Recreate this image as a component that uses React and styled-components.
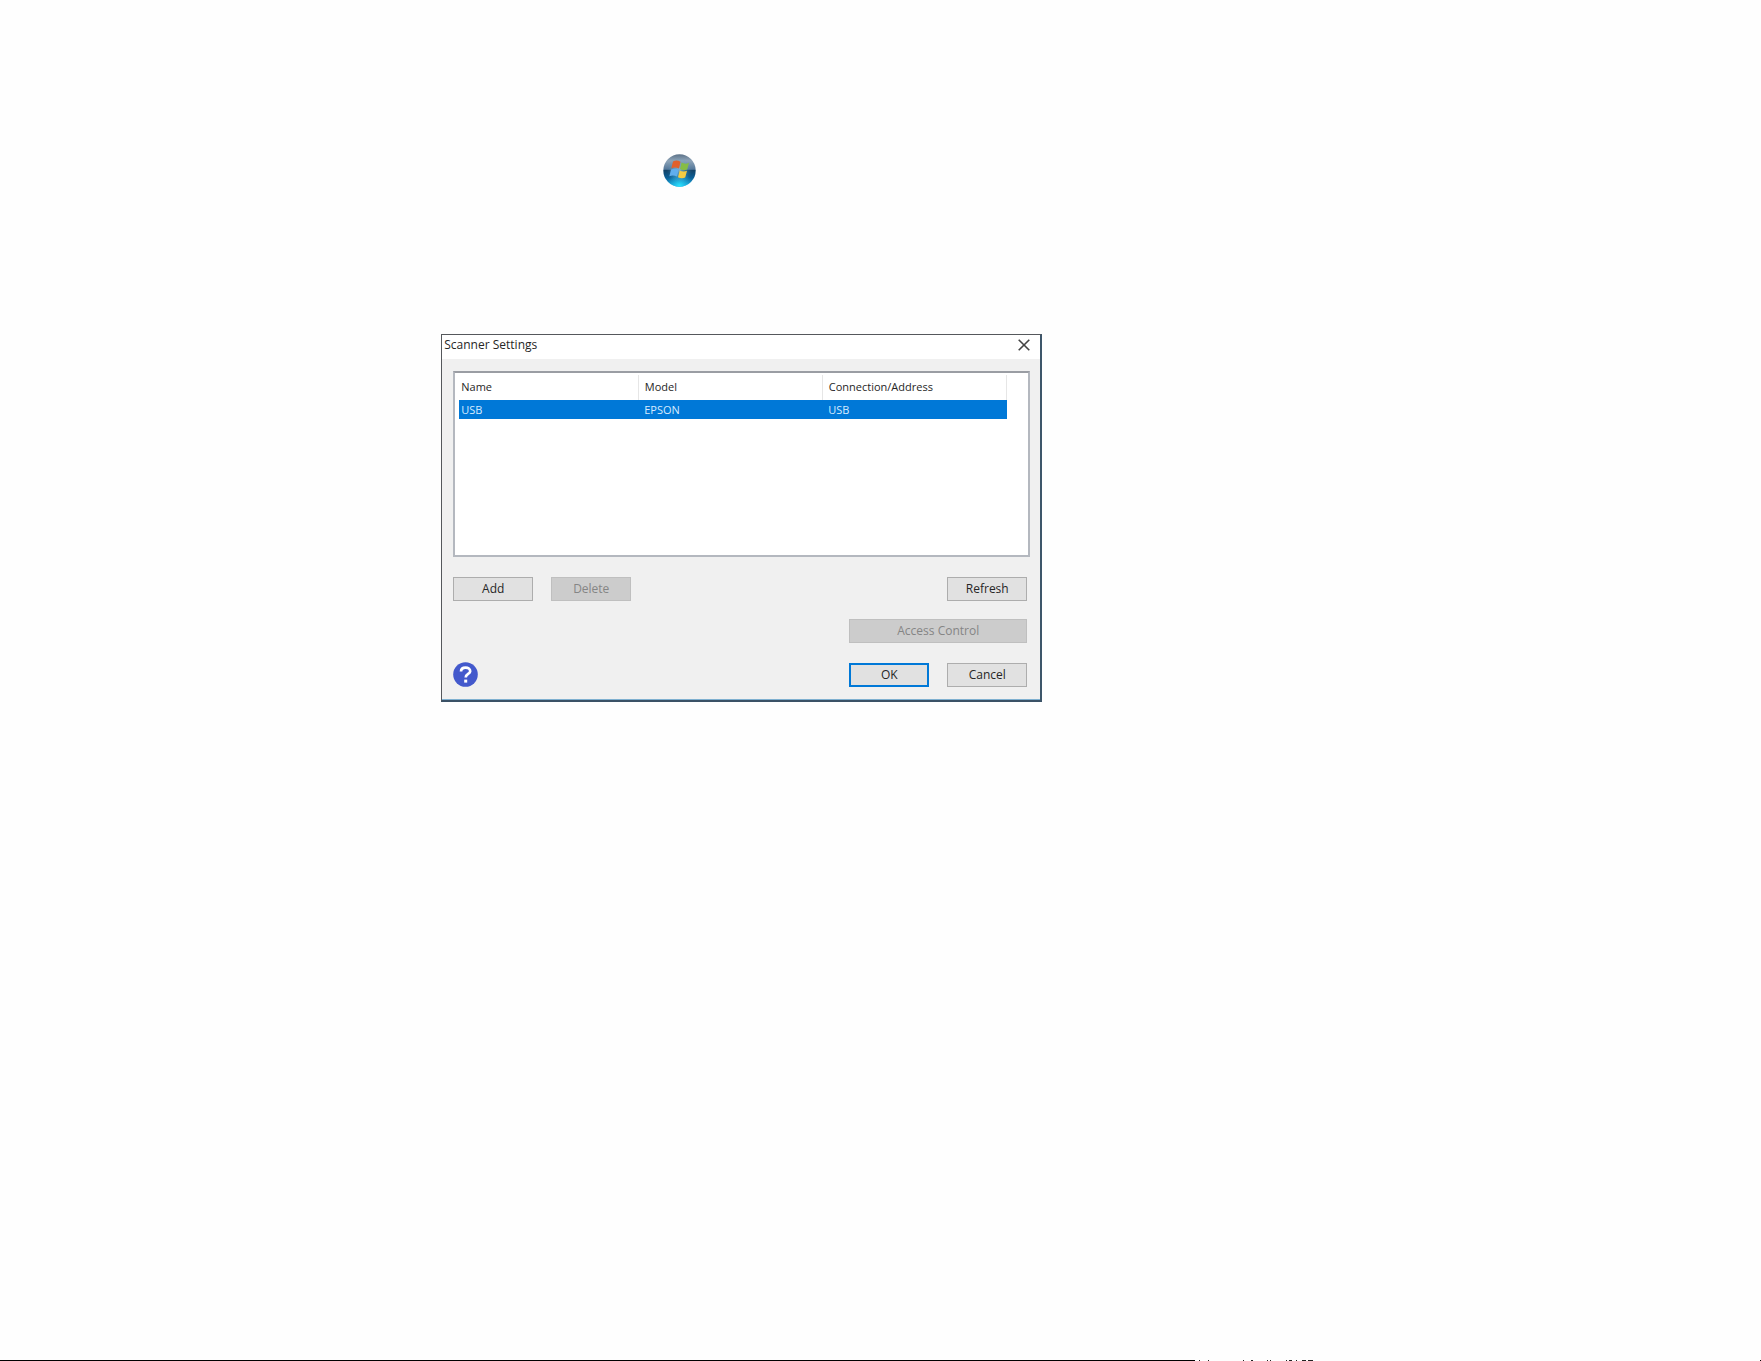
import React from "react";
import styled, { createGlobalStyle } from "styled-components";

const GlobalStyle = createGlobalStyle`
  * { box-sizing: border-box; }
  body { margin: 0; background: #fefefe; }
  button { font: inherit; margin: 0; padding: 0; }
`;

const Page = styled.main`
  min-height: 100vh;
  display: flex;
  flex-direction: column;
  font-family: "Open Sans", "Noto Sans", sans-serif;
  font-size: 12px;
  line-height: 16px;
  color: #262626;
`;

const Content = styled.div`
  flex: 1;
  display: flex;
  flex-direction: column;
  align-items: flex-start;
  gap: 147px;
  padding: 154px 24px 0 calc(25% + 1px);
`;

const StartOrb = styled.svg`
  width: 33px;
  height: 33px;
  margin-left: 222px;
`;

const Dialog = styled.section`
  width: 100%;
  max-width: 601px;
  background: #f0f0f0;
  border: 1px solid #55585c;
  border-right: 2px solid #3d566a;
  border-bottom: 2px solid #3a5166;
  box-shadow: inset 0 -1px #7fb0d0;
`;

const TitleBar = styled.header`
  display: flex;
  justify-content: space-between;
  align-items: center;
  height: 24px;
  padding: 0 10px 4px 2px;
  background: #fff;
`;

const Title = styled.h1`
  margin: 0;
  font-size: 12px;
  font-weight: 400;
`;

const CloseButton = styled.button`
  display: flex;
  border: 0;
  background: none;
`;

const Body = styled.div`
  padding: 12px 10px 13px 11px;
`;

const ListBox = styled.div`
  height: 186px;
  padding: 2px 21px 0 4px;
  background: #fff;
  border: 2px solid #b4b8bf;
  border-top-color: #9a9da3;
`;

const Table = styled.table`
  width: 100%;
  table-layout: fixed;
  border-collapse: collapse;
  font-size: 11px;
`;

const HeadCell = styled.th`
  width: ${(p) => p.$width};
  height: 25px;
  padding: 0 0 1px ${(p) => (p.$first ? "2px" : "6px")};
  border-right: 1px solid #e6e6e6;
  text-align: left;
  font-weight: 400;
`;

const SelectedRow = styled.tr`
  background: #0078d7;
  color: #d6ebff;
`;

const Cell = styled.td`
  height: 19px;
  padding: 0 0 0 ${(p) => (p.$first ? "2px" : "6px")};
`;

const ButtonRow = styled.div`
  display: flex;
  align-items: center;
  gap: 18px;
  padding-right: 3px;
  margin-top: ${(p) => p.$top};
`;

const Spacer = styled.span`
  flex: 1;
`;

const Button = styled.button`
  width: ${(p) => (p.$wide ? "178px" : "80px")};
  height: 24px;
  background: #e1e1e1;
  border: ${(p) => (p.$primary ? "2px solid #0078d7" : "1px solid #adadad")};
  color: #262626;
  &:disabled {
    background: #ccc;
    border-color: #bfbfbf;
    color: #858585;
  }
`;

const HelpButton = styled.button`
  width: 25px;
  height: 25px;
  border: 0;
  background: none;
`;

const PageEdge = styled.footer`
  display: flex;
  height: 1px;
`;

const EdgeRule = styled.div`
  width: 67.86%;
  background: #000;
`;

const EdgeMarks = styled.svg`
  width: 119px;
  height: 1px;
`;

const EdgeDot = styled.div`
  width: 1px;
  margin-left: auto;
  background: #000;
`;

const marks = [
  [4, 1], [13, 1], [48, 1], [56, 2], [72, 1], [75, 1], [91, 1],
  [94, 3], [101, 1], [107, 4], [113, 5],
];

const columns = [
  { label: "Name", value: "USB", width: "179px" },
  { label: "Model", value: "EPSON", width: "184px" },
  { label: "Connection/Address", value: "USB", width: "auto" },
];

export default function App() {
  return (
    <Page>
      <GlobalStyle />
      <Content>
        <StartOrb viewBox="0 0 33 33" role="img" aria-label="Start">
          <defs>
            <linearGradient id="orb" x1="0" y1="0" x2="0" y2="1">
              <stop offset="0" stopColor="#5c7288" />
              <stop offset=".2" stopColor="#8ea4b8" />
              <stop offset=".46" stopColor="#55789a" />
              <stop offset=".5" stopColor="#124368" />
              <stop offset=".72" stopColor="#0b5f96" />
              <stop offset="1" stopColor="#18a5d8" />
            </linearGradient>
            <radialGradient id="glow" cx=".5" cy=".98" r=".42">
              <stop offset="0" stopColor="#2be4ff" />
              <stop offset="1" stopColor="#1fb8ee" stopOpacity="0" />
            </radialGradient>
            <radialGradient id="halo" cx=".5" cy=".5" r=".42">
              <stop offset="0" stopColor="#a5d6e8" stopOpacity=".7" />
              <stop offset="1" stopColor="#4a9ac8" stopOpacity="0" />
            </radialGradient>
          </defs>
          <circle cx="16.500" cy="16.500" r="16.200" fill="url(#orb)" />
          <circle cx="16.500" cy="16.500" r="16.200" fill="url(#glow)" />
          <circle cx="16.500" cy="16.500" r="15" fill="url(#halo)" />
          <path d="M10 7.500C12.500 6 15 6.200 17.500 7.800L16 14.500C13.500 13.200 11 13 8.300 14.300Z" fill="#e2602c" />
          <path d="M18.600 8.600C21 10 23.500 10 26 8.800L24.200 15.500C21.800 16.600 19.500 16.400 17 15Z" fill="#86bd45" />
          <path d="M8 15.600C10.500 14.300 13.200 14.500 15.700 15.800L14 22.600C11.500 21.200 9 21 6.400 22.200Z" fill="#60aeee" />
          <path d="M16.700 16.400C19 17.800 21.500 17.900 24 16.800L22.200 23.600C19.800 24.700 17.400 24.600 15 23.200Z" fill="#f6cb42" />
        </StartOrb>
        <Dialog aria-labelledby="dialog-title">
          <TitleBar>
            <Title id="dialog-title">Scanner Settings</Title>
            <CloseButton type="button" aria-label="Close">
              <svg width="12" height="12" viewBox="0 0 12 12">
                <path d="M.7.7 11.3 11.3M11.3.7.7 11.3" stroke="#444" strokeWidth="1.6" />
              </svg>
            </CloseButton>
          </TitleBar>
          <Body>
            <ListBox>
              <Table>
                <thead>
                  <tr>
                    {columns.map((c, i) => (
                      <HeadCell key={c.label} $width={c.width} $first={i === 0}>{c.label}</HeadCell>
                    ))}
                  </tr>
                </thead>
                <tbody>
                  <SelectedRow aria-selected="true">
                    {columns.map((c, i) => (
                      <Cell key={c.label} $first={i === 0}>{c.value}</Cell>
                    ))}
                  </SelectedRow>
                </tbody>
              </Table>
            </ListBox>
            <ButtonRow $top="20px">
              <Button type="button">Add</Button>
              <Button type="button" disabled>Delete</Button>
              <Spacer />
              <Button type="button">Refresh</Button>
            </ButtonRow>
            <ButtonRow $top="18px">
              <Spacer />
              <Button type="button" $wide disabled>Access Control</Button>
            </ButtonRow>
            <ButtonRow $top="19px">
              <HelpButton type="button" aria-label="Help">
                <svg width="25" height="25" viewBox="0 0 25 25">
                  <circle cx="12.5" cy="12.5" r="12.3" fill="#4359cc" />
                  <path d="M8 9.6C8 6.9 10 5.6 12.6 5.6S17.200 7 17.200 9.200C17.200 12 12.700 12 12.700 15.400" fill="none" stroke="#fff" strokeWidth="2.700" />
                  <rect x="11.200" y="17.600" width="3" height="3" fill="#fff" />
                </svg>
              </HelpButton>
              <Spacer />
              <Button type="button" $primary>OK</Button>
              <Button type="button">Cancel</Button>
            </ButtonRow>
          </Body>
        </Dialog>
      </Content>
      <PageEdge aria-hidden="true">
        <EdgeRule />
        <EdgeMarks viewBox="0 0 119 1">
          {marks.map(([x, w]) => (
            <rect key={x} x={x} y="0" width={w} height="1" fill="#222" />
          ))}
        </EdgeMarks>
        <EdgeDot />
      </PageEdge>
    </Page>
  );
}
